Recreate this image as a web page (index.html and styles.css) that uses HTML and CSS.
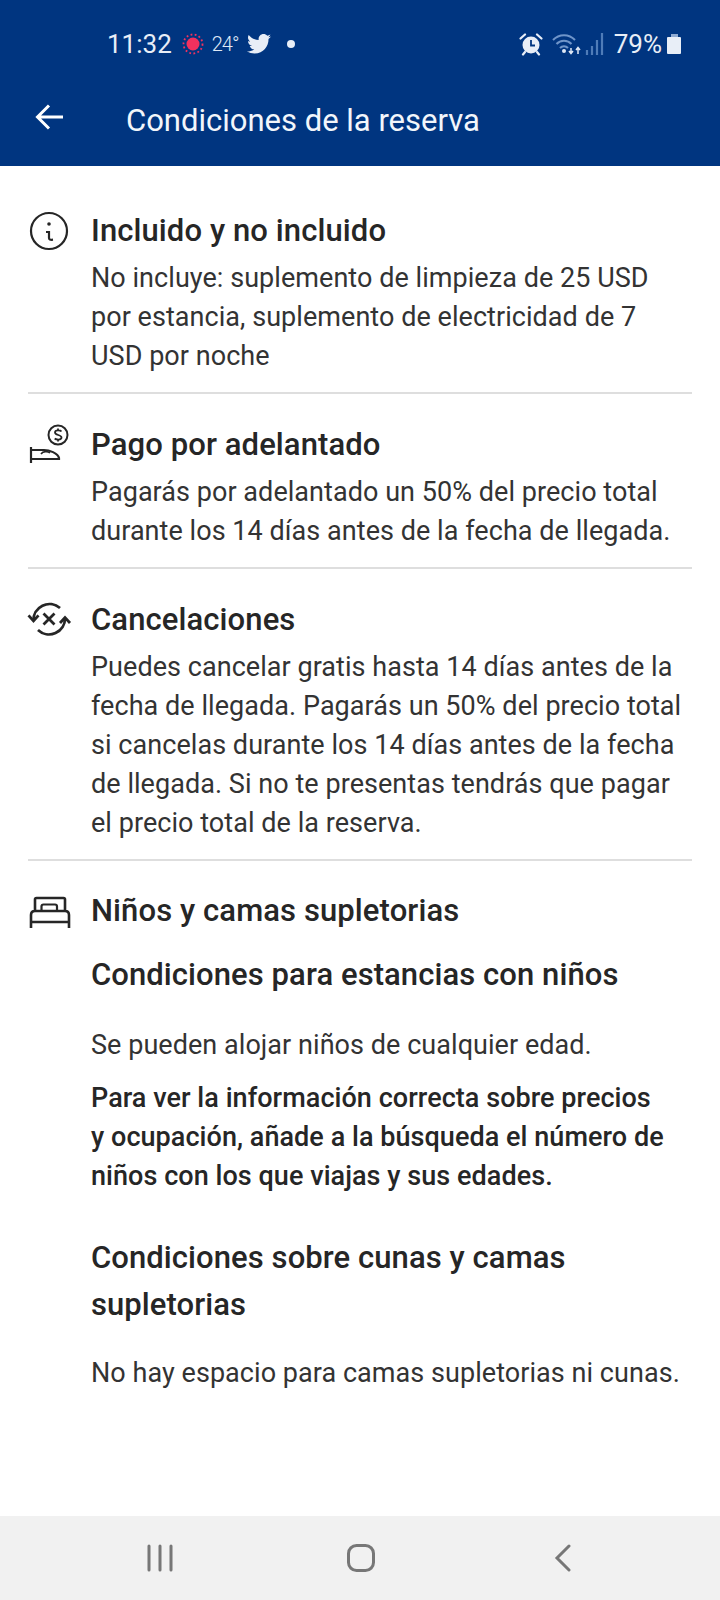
FILE: index.html
```html
<!DOCTYPE html>
<html lang="es">
<head>
    <meta charset="UTF-8">
    <title>Condiciones de la reserva</title>
    <link rel="stylesheet" href="styles.css">
</head>
<body>
    <div class="screen">
        <header class="header">
            <div class="status-bar">
                <div class="status-left">
                    <span class="clock">11:32</span>
                    <svg class="ic-sun" width="22" height="22" viewBox="0 0 22 22">
                        <circle cx="11" cy="11" r="6.5" fill="#f2315e"/>
                        <circle cx="11" cy="11" r="9.5" fill="none" stroke="#f2315e" stroke-width="1.8" stroke-dasharray="1.8 2.4"/>
                    </svg>
                    <span class="temp">24°</span>
                    <svg class="ic-bird" width="24" height="20" viewBox="0 0 24 20">
                        <path fill="#e8eef7" d="M24 2.4c-.9.4-1.8.7-2.8.8 1-.6 1.800-1.600 2.200-2.700-1 .6-2 1-3.100 1.200C19.300.7 18 0 16.500 0c-2.700 0-4.900 2.200-4.900 4.900 0 .4 0 .8.100 1.100C7.600 5.800 4 3.900 1.700.9c-.4.700-.7 1.600-.7 2.500 0 1.700.9 3.200 2.200 4.100-.8 0-1.600-.2-2.200-.6v.1c0 2.400 1.700 4.400 3.900 4.800-.4.100-.8.200-1.300.2-.3 0-.6 0-.9-.1.600 2 2.400 3.400 4.600 3.400-1.700 1.300-3.800 2.100-6.100 2.100-.4 0-.8 0-1.200-.1C2.200 18.700 4.800 19.500 7.500 19.500c9.100 0 14-7.500 14-14v-.6c1-.7 1.800-1.600 2.500-2.500z"/>
                    </svg>
                    <span class="dot"></span>
                </div>
                <div class="status-right">
                    <svg class="ic-alarm" width="24" height="24" viewBox="0 0 24 24">
                        <circle cx="12" cy="13" r="8.500" fill="#e8eef7"/>
                        <path d="M12 8v5.500h4" fill="none" stroke="#003580" stroke-width="1.800"/>
                        <path d="M1.500 6.500 6 2.500M22.500 6.500 18 2.500M6 20l-2 2.500M18 20l2 2.500" stroke="#e8eef7" stroke-width="2.200" stroke-linecap="round"/>
                    </svg>
                    <svg class="ic-wifi" width="30" height="24" viewBox="0 0 30 24">
                        <path d="M1 8c6-6.500 16-6.500 22 0M4.500 12c4-4.500 11-4.500 15 0M8 16c2.200-2.500 5.800-2.500 8 0" fill="none" stroke="#6f95c9" stroke-width="2"/>
                        <circle cx="12" cy="19" r="2" fill="#dfe8f5"/>
                        <path d="M19 16v5M17 19l2 2.500 2-2.500M26 22v-6M24 18l2-2.500 2 2.500" fill="none" stroke="#dfe8f5" stroke-width="1.500"/>
                    </svg>
                    <svg class="ic-signal" width="20" height="24" viewBox="0 0 20 24">
                        <path d="M2 23v-5M7 23v-9M12 23V8M17 23V1" stroke="#4f7cb8" stroke-width="2.200"/>
                    </svg>
                    <span class="battery-text">79%</span>
                    <span class="battery"><span class="battery-cap"></span><span class="battery-fill"></span></span>
                </div>
            </div>
            <div class="toolbar">
                <svg class="ic-back" width="30" height="28" viewBox="0 0 30 28">
                    <path d="M28 14H3M14 2.500 2.500 14 14 25.500" fill="none" stroke="#fff" stroke-width="3"/>
                </svg>
                <h1 class="title">Condiciones de la reserva</h1>
            </div>
        </header>

        <main class="content">
            <section class="block">
                <svg class="block-icon" width="40" height="40" viewBox="0 0 40 40">
                    <circle cx="20" cy="18" r="18" fill="none" stroke="#262626" stroke-width="2.200"/>
                    <circle cx="20" cy="11" r="1.800" fill="#262626"/>
                    <path d="M17 19h3v6c0 1.500 1 2 4 1.700" fill="none" stroke="#262626" stroke-width="2.200"/>
                </svg>
                <div class="block-text">
                    <h2>Incluido y no incluido</h2>
                    <p>No incluye: suplemento de limpieza de 25 USD por estancia, suplemento de electricidad de 7 USD por noche</p>
                </div>
            </section>

            <section class="block">
                <svg class="block-icon" width="40" height="40" viewBox="0 0 40 40">
                    <circle cx="29" cy="8" r="9.500" fill="none" stroke="#262626" stroke-width="2"/>
                    <path d="M32.500 4.500c-1-1.300-6.500-1.800-6.500 1 0 3 6.500 2 6.500 5 0 2.800-5.500 2.300-6.800 1M29 1.500v1.500M29 13v1.500" fill="none" stroke="#262626" stroke-width="1.800"/>
                    <path d="M2 20v16M2 23h13c5 0 14 3 15 8v1H2" fill="none" stroke="#262626" stroke-width="2.200"/>
                    <path d="M12 27c2-3 7-3 9-1" fill="none" stroke="#262626" stroke-width="1.600"/>
                </svg>
                <div class="block-text">
                    <h2>Pago por adelantado</h2>
                    <p>Pagarás por adelantado un 50% del precio total durante los 14 días antes de la fecha de llegada.</p>
                </div>
            </section>

            <section class="block">
                <svg class="block-icon" width="44" height="40" viewBox="0 0 44 40">
                    <path d="M6.500 19A16 16 0 0 1 33 6M38 16A16 16 0 0 1 11 28" fill="none" stroke="#262626" stroke-width="2.800"/>
                    <path d="M1.500 13.300l5 5.700 5-5.700M33 21l5-5.500 5 5.500" fill="none" stroke="#262626" stroke-width="2.800"/>
                    <path d="M16.500 11.500l11 11M27.500 11.500l-11 11" stroke="#262626" stroke-width="2.800"/>
                </svg>
                <div class="block-text">
                    <h2>Cancelaciones</h2>
                    <p>Puedes cancelar gratis hasta 14 días antes de la fecha de llegada. Pagarás un 50% del precio total si cancelas durante los 14 días antes de la fecha de llegada. Si no te presentas tendrás que pagar el precio total de la reserva.</p>
                </div>
            </section>

            <section class="block block-last">
                <svg class="block-icon" width="42" height="36" viewBox="0 0 42 36">
                    <path d="M7 18V6.500C7 5.500 7.500 5 8.500 5h27c1 0 1.500.5 1.500 1.500V18M3 35V22c0-2.500 1.500-4 4-4h30c2.500 0 4 1.500 4 4v13M3 29h38" fill="none" stroke="#262626" stroke-width="2.600"/>
                    <path d="M13.500 18v-4.500c0-1.500.5-2 2-2h11.500c1.500 0 2 .5 2 2V18" fill="none" stroke="#262626" stroke-width="2.200"/>
                </svg>
                <div class="block-text">
                    <h2>Niños y camas supletorias</h2>
                    <h3 class="sub-first">Condiciones para estancias con niños</h3>
                    <p class="sub-note">Se pueden alojar niños de cualquier edad.</p>
                    <p class="strong">Para ver la información correcta sobre precios<br>y ocupación, añade a la búsqueda el número de niños con los que viajas y sus edades.</p>
                    <h3 class="sub-second">Condiciones sobre cunas y camas supletorias</h3>
                    <p class="sub-note sub-note-last">No hay espacio para camas supletorias ni cunas.</p>
                </div>
            </section>
        </main>

        <nav class="nav-bar">
            <svg width="28" height="28" viewBox="0 0 28 28">
                <path d="M3 2v24M14 2v24M25 2v24" stroke="#777" stroke-width="3" stroke-linecap="round"/>
            </svg>
            <svg class="nav-home" width="30" height="28" viewBox="0 0 30 28">
                <rect x="1.500" y="1.500" width="25" height="25" rx="8" fill="none" stroke="#777" stroke-width="3"/>
            </svg>
            <svg width="18" height="28" viewBox="0 0 18 28">
                <path d="M15 2 3 14l12 12" fill="none" stroke="#777" stroke-width="3" stroke-linecap="round"/>
            </svg>
        </nav>
    </div>
</body>
</html>
```

FILE: styles.css
```css
* {
    box-sizing: border-box;
}
body {
    margin: 0;
    font-family: 'Roboto', 'Liberation Sans', sans-serif;
    background-color: #fff;
    color: #262626;
}
.screen {
    width: 720px;
    height: 1600px;
    display: flex;
    flex-direction: column;
    overflow: hidden;
}
.header {
    height: 166px;
    flex-shrink: 0;
    background-color: #003580;
    color: #fff;
}
.status-bar {
    height: 88px;
    padding: 26px 39px 0 107px;
    display: flex;
    justify-content: space-between;
    align-items: flex-start;
}
.status-left,
.status-right {
    height: 36px;
    display: flex;
    align-items: center;
}
.clock {
    font-size: 26px;
    color: #e8eef7;
    margin-right: 10px;
}
.temp {
    font-size: 20px;
    font-weight: 300;
    letter-spacing: -1px;
    color: #dfe8f5;
    margin: 0 8px 0 8px;
}
.dot {
    width: 8px;
    height: 8px;
    border-radius: 50%;
    background-color: #e8eef7;
    margin-left: 16px;
}
.ic-wifi {
    margin-left: 9px;
}
.ic-signal {
    margin-left: 3px;
}
.battery-text {
    font-size: 26px;
    color: #e8eef7;
    margin-left: 9px;
}
.battery {
    width: 14px;
    height: 20px;
    margin-left: 5px;
    display: flex;
    flex-direction: column;
    align-items: center;
}
.battery-cap {
    width: 7px;
    height: 3px;
    background-color: #8fabd3;
}
.battery-fill {
    width: 14px;
    flex: 1;
    background-color: #e8eef7;
    border-radius: 1px;
}
.toolbar {
    height: 64px;
    padding-left: 35px;
    display: flex;
    align-items: center;
}
.ic-back {
    margin-bottom: 6px;
}
.title {
    margin: 0 0 0 61px;
    font-size: 31px;
    font-weight: 400;
    color: #f2f6fb;
}
.content {
    flex: 1;
    padding: 14px 28px 0;
}
.block {
    display: flex;
    padding: 33px 0 16px;
    border-bottom: 2px solid #dedede;
}
.block-last {
    padding-top: 32px;
    border-bottom: none;
}
.block-icon {
    width: 64px;
    flex-shrink: 0;
    margin-left: -1px;
    padding-right: 20px;
    overflow: visible;
}
.block-text h2 {
    margin: 0 0 10px;
    font-size: 31px;
    font-weight: 500;
    line-height: 36px;
    letter-spacing: 0.1px;
}
.block-text p {
    margin: 0;
    font-size: 27px;
    line-height: 39px;
    letter-spacing: 0.05px;
    color: #333;
}
.block-text h3 {
    margin: 0;
    font-size: 31px;
    font-weight: 500;
    line-height: 47px;
    letter-spacing: 0.08px;
}
.sub-first {
    padding-top: 12px;
}
.sub-second {
    padding-top: 38px;
}
.block-text .sub-note {
    margin: 28px 0 14px;
}
.block-text .sub-note-last {
    margin-top: 26px;
}
.block-text .strong {
    font-weight: 500;
    color: #262626;
}
.nav-bar {
    height: 84px;
    flex-shrink: 0;
    background-color: #f1f1f1;
    display: flex;
    justify-content: space-between;
    align-items: center;
    padding: 0 148px 0 146px;
}
.nav-home {
    margin-right: 4px;
}
```
